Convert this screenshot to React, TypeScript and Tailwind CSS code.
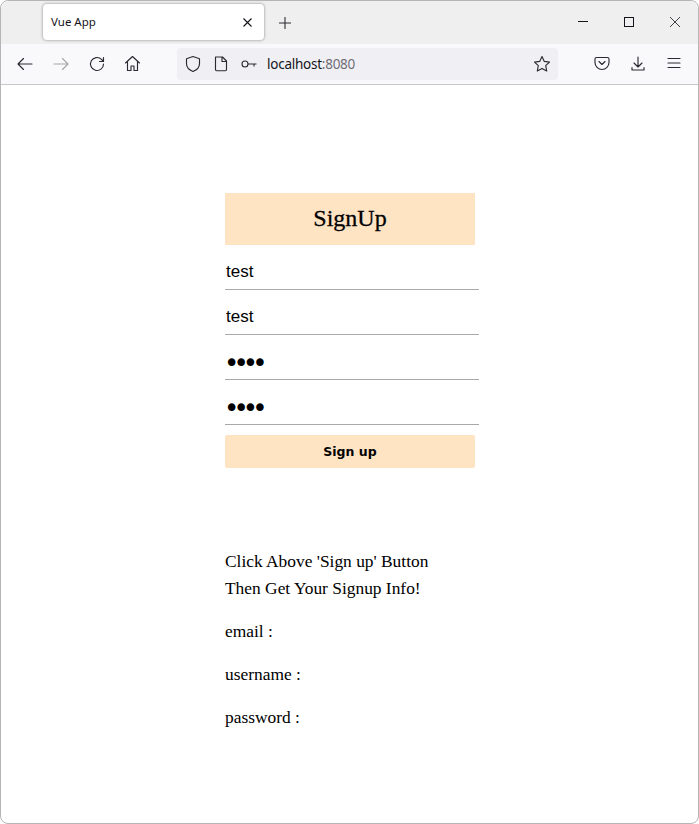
import React from 'react'

const serif = 'font-["Liberation_Serif",serif]'
const inputCls =
  'block w-[254px] h-[45px] pt-[9px] px-[1px] border-b border-[#a9a9a9] bg-white text-[17px] text-black outline-none font-["Liberation_Sans",sans-serif]'
const passwordCls =
  'block w-[254px] h-[45px] pt-[12px] px-[0px] indent-[-1px] border-b border-[#a9a9a9] bg-white text-[26px] tracking-[-5.9px] text-black outline-none font-["DejaVu_Sans",sans-serif]'

function ToolIcon({ children, className = '' }: { children: React.ReactNode; className?: string }) {
  return (
    <svg width="18" height="18" viewBox="0 0 18 18" fill="none" stroke="#2b2a33" strokeWidth="1.15" strokeLinecap="round" strokeLinejoin="round" className={className}>
      {children}
    </svg>
  )
}

function TitleBar() {
  return (
    <div className="h-[43px] flex items-start bg-[#efeff0] rounded-t-[8px]">
      <div className="ml-[42px] mt-[3px] w-[221px] h-[36px] bg-white rounded-[4px] shadow-[0_0_3px_rgba(0,0,0,0.45)] flex items-center justify-between pl-[8px] pr-[12px]">
        <span className='text-[11.5px] text-[#15141a] font-["Noto_Sans",sans-serif]'>Vue App</span>
        <svg width="9" height="9" viewBox="0 0 9 9" stroke="#15141a" strokeWidth="1.1">
          <path d="M0.5 0.5l8 8M8.500 0.5l-8 8" />
        </svg>
      </div>
      <svg width="12" height="12" viewBox="0 0 12 12" stroke="#2b2a33" strokeWidth="1.1" className="ml-[15px] mt-[16px]">
        <path d="M6 0v12M0 6h12" />
      </svg>
      <div className="ml-auto flex items-center mt-[16px] mr-[18px] gap-[36px]">
        <svg width="10" height="10" viewBox="0 0 10 10" stroke="#15141a" strokeWidth="1">
          <path d="M0 4.500h10" />
        </svg>
        <svg width="10" height="10" viewBox="0 0 10 10" fill="none" stroke="#15141a" strokeWidth="1">
          <rect x="0.5" y="0.5" width="9" height="9" />
        </svg>
        <svg width="10" height="10" viewBox="0 0 10 10" stroke="#15141a" strokeWidth="0.8">
          <path d="M0 0l10 10M10 0L0 10" />
        </svg>
      </div>
    </div>
  )
}

function Toolbar() {
  return (
    <div className="h-[41px] bg-[#f9f9fb] border-b border-[#c8c8c8] flex items-start">
      <div className="flex items-center gap-[18px] ml-[15px] mt-[11px]">
        <ToolIcon>
          <path d="M16 9H2M7.500 3.500L2 9l5.500 5.500" />
        </ToolIcon>
        <ToolIcon className="opacity-40">
          <path d="M2 9h14M10.500 3.500L16 9l-5.500 5.500" />
        </ToolIcon>
        <ToolIcon>
          <path d="M15.500 9a6.500 6.500 0 1 1-2-4.700L15.500 6.500M15.500 2.500v4h-4" />
        </ToolIcon>
        <ToolIcon>
          <path d="M1.500 8L8.500 1.500 15.500 8M3.500 6.500v9h3.500V11h3v4.500h3.500v-9" />
        </ToolIcon>
      </div>
      <div className="ml-[35px] mt-[4px] w-[381px] h-[32px] bg-[#f0f0f4] rounded-[4px] flex items-center pl-[7px] pr-[7px]">
        <ToolIcon>
          <path d="M9 1.500l6.500 2.200v5c0 3.500-3 6.300-6.500 7.800-3.500-1.500-6.500-4.300-6.500-7.800v-5z" />
        </ToolIcon>
        <ToolIcon className="ml-[10px]">
          <path d="M3.500 2h7l4 4v8.500a1.200 1.200 0 0 1-1.200 1.200H4.700a1.200 1.200 0 0 1-1.200-1.200zM10 2v4.500h4.500" />
        </ToolIcon>
        <svg width="16" height="10" viewBox="0 0 16 10" fill="none" stroke="#2b2a33" strokeWidth="1.100" className="ml-[11px]">
          <circle cx="4" cy="5" r="3" />
          <path d="M7 5h8.500M13 5v2.500" />
        </svg>
        <span className='ml-[10px] pt-[1px] text-[13.5px] tracking-[-0.25px] text-[#15141a] font-["Noto_Sans",sans-serif]'>
          localhost<span className="text-[#6f6e75]">:8080</span>
        </span>
        <svg width="18" height="18" viewBox="0 0 18 18" fill="none" stroke="#2b2a33" strokeWidth="1.150" strokeLinejoin="round" className="ml-auto">
          <path d="M9 1.500l2.300 4.900 5.200.7-3.800 3.600 1 5.300L9 13.400 4.300 16l1-5.300L1.500 7.100l5.200-.7z" />
        </svg>
      </div>
      <div className="flex items-center ml-[35px] mt-[11px] gap-[18px]">
        <ToolIcon>
          <path d="M3.500 2.500h11a1.500 1.500 0 0 1 1.500 1.500v3.500a7 7 0 0 1-14 0V4a1.500 1.500 0 0 1 1.500-1.500zM6 6.500l3 3 3-3" />
        </ToolIcon>
        <ToolIcon>
          <path d="M9 2v10M5 8l4 4 4-4M3 12.500v2.500h12v-2.500" />
        </ToolIcon>
        <ToolIcon>
          <path d="M3 3.500h12M3 8h12M3 12.500h12" />
        </ToolIcon>
      </div>
    </div>
  )
}

export default function App() {
  return (
    <div className="w-[699px] h-[824px] bg-white overflow-hidden">
      <div className="h-full border border-[#b5b5b5] rounded-[8px] overflow-hidden">
        <TitleBar />
        <Toolbar />

        <div className="pl-[224px] pt-[108px]">
          <h1 className={`w-[250px] h-[52px] pb-[2px] flex items-center justify-center bg-[#ffe4c4] text-[24px] text-black [-webkit-text-stroke:0.3px_black] ${serif}`}>SignUp</h1>
          <input className={inputCls} defaultValue="test" readOnly />
          <input className={inputCls} defaultValue="test" readOnly />
          <input className={passwordCls} type="password" defaultValue="test" readOnly />
          <input className={passwordCls} type="password" defaultValue="test" readOnly />
          <button className='block mt-[10px] w-[250px] h-[33px] pt-[1px] bg-[#ffe4c4] rounded-[2px] text-[12.5px] font-bold text-black font-["DejaVu_Sans",sans-serif]'>
            Sign up
          </button>

          <div className={`mt-[80px] text-[17.4px] leading-[27px] text-black ${serif}`}>
            <p>Click Above 'Sign up' Button</p>
            <p>Then Get Your Signup Info!</p>
            <p className="mt-[16px]">email :</p>
            <p className="mt-[16px]">username :</p>
            <p className="mt-[16px]">password :</p>
          </div>
        </div>
      </div>
    </div>
  )
}
